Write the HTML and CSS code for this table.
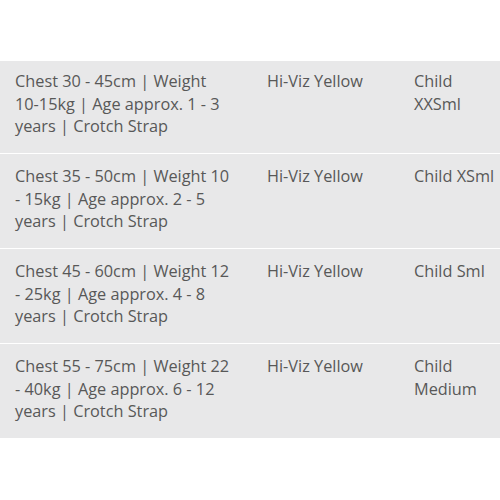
FILE: index.html
```html
<!DOCTYPE html>
<html lang="en">
<head>
<meta charset="utf-8">
<title>Sizes</title>
<link rel="stylesheet" href="styles.css">
</head>
<body>
<table class="sizes">
  <colgroup>
    <col class="c-desc">
    <col class="c-colour">
    <col class="c-size">
  </colgroup>
  <tbody>
    <tr class="row first">
      <td class="desc">Chest 30 - 45cm | Weight <span class="nb">10-15kg</span> | Age approx. 1 - 3 years | Crotch Strap</td>
      <td class="colour">Hi-Viz Yellow</td>
      <td class="size">Child XXSml</td>
    </tr>
    <tr class="row">
      <td class="desc">Chest 35 - 50cm | Weight 10 - 15kg | Age approx. 2 - 5 years | Crotch Strap</td>
      <td class="colour">Hi-Viz Yellow</td>
      <td class="size">Child XSml</td>
    </tr>
    <tr class="row">
      <td class="desc">Chest 45 - 60cm | Weight 12 - 25kg | Age approx. 4 - 8 years | Crotch Strap</td>
      <td class="colour">Hi-Viz Yellow</td>
      <td class="size">Child Sml</td>
    </tr>
    <tr class="row">
      <td class="desc">Chest 55 - 75cm | Weight 22 - 40kg | Age approx. 6 - 12 years | Crotch Strap</td>
      <td class="colour">Hi-Viz Yellow</td>
      <td class="size">Child Medium</td>
    </tr>
  </tbody>
</table>
</body>
</html>
```
FILE: styles.css
```css
html, body {
  margin: 0;
  padding: 0;
  background: #ffffff;
}

body {
  font-family: "Open Sans", "Liberation Sans", sans-serif;
  font-size: 16.3px;
  line-height: 22.5px;
  color: #585858;
  overflow: hidden;
}

.sizes {
  margin-top: 61px;
  width: 500px;
  table-layout: fixed;
  border-collapse: collapse;
  background: #e8e8e9;
}

.c-desc { width: 252px; }
.c-colour { width: 147px; }
.c-size { width: 101px; }

.row td {
  vertical-align: top;
  padding: 11px 15px 0 15px;
  height: 83px;
  border-top: 1px solid #ffffff;
}

.row.first td {
  padding-top: 9px;
  height: 83px;
  border-top: 0;
}

.row td.desc {
  padding-right: 21px;
}

.row td.size {
  padding-right: 0;
}

.nb {
  white-space: nowrap;
}
```
